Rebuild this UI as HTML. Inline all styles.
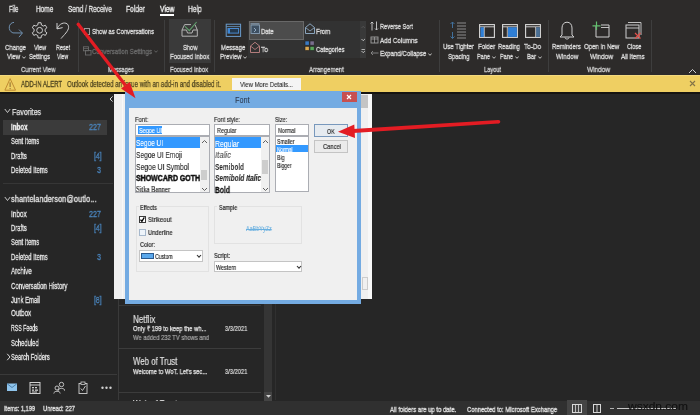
<!DOCTYPE html><html><head><meta charset="utf-8"><style>
html,body{margin:0;padding:0;}
body{width:700px;height:415px;position:relative;overflow:hidden;background:#262626;font-family:"Liberation Sans",sans-serif;}
.t{position:absolute;white-space:pre;line-height:1;transform-origin:0 0;will-change:transform;}
.r{position:absolute;}
</style></head><body>
<div class="r" style="left:0px;top:0px;width:700px;height:75px;background:#2d2b2a;"></div>
<div class="t" style="left:8.50px;top:5.10px;font-size:8.4px;color:#e4e4e4;transform:scaleX(0.7025);font-family:'Liberation Sans', sans-serif;-webkit-text-stroke:0.35px #e4e4e4;">File</div>
<div class="t" style="left:35.70px;top:5.10px;font-size:8.4px;color:#e4e4e4;transform:scaleX(0.7714);font-family:'Liberation Sans', sans-serif;-webkit-text-stroke:0.35px #e4e4e4;">Home</div>
<div class="t" style="left:68.10px;top:5.10px;font-size:8.4px;color:#e4e4e4;transform:scaleX(0.7708);font-family:'Liberation Sans', sans-serif;-webkit-text-stroke:0.35px #e4e4e4;">Send / Receive</div>
<div class="t" style="left:126.40px;top:5.10px;font-size:8.4px;color:#e4e4e4;transform:scaleX(0.7937);font-family:'Liberation Sans', sans-serif;-webkit-text-stroke:0.35px #e4e4e4;">Folder</div>
<div class="t" style="left:159.60px;top:5.10px;font-size:8.4px;color:#ffffff;transform:scaleX(0.7973);font-family:'Liberation Sans', sans-serif;-webkit-text-stroke:0.35px #ffffff;">View</div>
<div class="t" style="left:188.10px;top:5.10px;font-size:8.4px;color:#e4e4e4;transform:scaleX(0.7937);font-family:'Liberation Sans', sans-serif;-webkit-text-stroke:0.35px #e4e4e4;">Help</div>
<div class="r" style="left:159.6px;top:14px;width:14.400000000000006px;height:1.5px;background:#ffffff;"></div>
<div class="r" style="left:78px;top:20px;width:1px;height:52px;background:#3e3e3e;"></div>
<div class="r" style="left:164px;top:20px;width:1px;height:52px;background:#3e3e3e;"></div>
<div class="r" style="left:214px;top:20px;width:1px;height:52px;background:#3e3e3e;"></div>
<div class="r" style="left:439px;top:20px;width:1px;height:52px;background:#3e3e3e;"></div>
<div class="r" style="left:547.5px;top:20px;width:1.0px;height:52px;background:#3e3e3e;"></div>
<div class="r" style="left:651px;top:20px;width:1px;height:52px;background:#3e3e3e;"></div>
<div class="t" style="left:5.00px;top:43.69px;font-size:8px;color:#dcdcdc;transform:scaleX(0.7489);font-family:'Liberation Sans', sans-serif;-webkit-text-stroke:0.35px #dcdcdc;">Change</div>
<div class="t" style="left:6.60px;top:53.19px;font-size:8px;color:#dcdcdc;transform:scaleX(0.7558);font-family:'Liberation Sans', sans-serif;-webkit-text-stroke:0.35px #dcdcdc;">View</div>
<div class="t" style="left:34.00px;top:43.69px;font-size:8px;color:#dcdcdc;transform:scaleX(0.6977);font-family:'Liberation Sans', sans-serif;-webkit-text-stroke:0.35px #dcdcdc;">View</div>
<div class="t" style="left:29.00px;top:53.19px;font-size:8px;color:#dcdcdc;transform:scaleX(0.7261);font-family:'Liberation Sans', sans-serif;-webkit-text-stroke:0.35px #dcdcdc;">Settings</div>
<div class="t" style="left:55.50px;top:43.69px;font-size:8px;color:#dcdcdc;transform:scaleX(0.6753);font-family:'Liberation Sans', sans-serif;-webkit-text-stroke:0.35px #dcdcdc;">Reset</div>
<div class="t" style="left:57.00px;top:53.19px;font-size:8px;color:#dcdcdc;transform:scaleX(0.6395);font-family:'Liberation Sans', sans-serif;-webkit-text-stroke:0.35px #dcdcdc;">View</div>
<div class="t" style="left:21.00px;top:66.49px;font-size:8px;color:#cfcfcf;transform:scaleX(0.7480);font-family:'Liberation Sans', sans-serif;-webkit-text-stroke:0.35px #cfcfcf;">Current View</div>
<svg class="r" style="left:21.5px;top:55.5px" width="4" height="3" viewBox="0 0 4 3"><path d="M0.3 0.5 L2 2.3 L3.7 0.5" stroke="#dcdcdc" stroke-width="0.9" fill="none"/></svg>
<svg class="r" style="left:0px;top:0px" width="700" height="415" viewBox="0 0 700 415"><path d="M14 22.4 C8.5 22.6 7.3 30.6 12.9 32.9 L22.3 33" stroke="#7192b2" stroke-width="1" fill="none"/><path d="M19 29.6 L22.4 33 L19 37.2" stroke="#7192b2" stroke-width="1" fill="none"/></svg>
<svg class="r" style="left:0px;top:0px" width="700" height="415" viewBox="0 0 700 415"><path d="M41.07 22.74 L38.13 22.74 L37.78 25.01 L35.93 26.07 L33.79 25.25 L32.32 27.79 L34.10 29.23 L34.10 31.37 L32.32 32.81 L33.79 35.35 L35.93 34.53 L37.78 35.59 L38.13 37.86 L41.07 37.86 L41.42 35.59 L43.27 34.53 L45.41 35.35 L46.88 32.81 L45.10 31.37 L45.10 29.23 L46.88 27.79 L45.41 25.25 L43.27 26.07 L41.42 25.01 Z" stroke="#cfcfcf" stroke-width="1" fill="none" stroke-linejoin="round"/><circle cx="39.6" cy="30.3" r="2.9" stroke="#cfcfcf" stroke-width="1" fill="none"/></svg>
<svg class="r" style="left:0px;top:0px" width="700" height="415" viewBox="0 0 700 415"><path d="M57.2 28.6 C60 21.5 68.8 21.2 68.6 27.5 C68.4 31 64 35 61 38.6" stroke="#cfcfcf" stroke-width="1" fill="none"/><path d="M57 23 L57 28.9 L62.6 27.6" stroke="#cfcfcf" stroke-width="1" fill="none"/></svg>
<div class="r" style="left:83.6px;top:27.5px;width:6.300000000000011px;height:7.100000000000001px;background:transparent;border:1px solid #9a9a9a;box-sizing:border-box;"></div>
<div class="t" style="left:91.90px;top:28.09px;font-size:8px;color:#dcdcdc;transform:scaleX(0.7389);font-family:'Liberation Sans', sans-serif;-webkit-text-stroke:0.35px #dcdcdc;">Show as Conversations</div>
<svg class="r" style="left:82px;top:45px" width="10" height="11" viewBox="0 0 10 11"><rect x="1.5" y="1.8" width="5" height="4" stroke="#6a6a6a" fill="none" stroke-width="0.9"/><rect x="3.5" y="5.5" width="5.5" height="4.5" stroke="#6a6a6a" fill="none" stroke-width="0.9"/><line x1="1.5" y1="3.5" x2="6.5" y2="3.5" stroke="#6a6a6a" stroke-width="0.7"/></svg>
<div class="t" style="left:92.00px;top:47.69px;font-size:8px;color:#6a6a6a;transform:scaleX(0.7665);font-family:'Liberation Sans', sans-serif;-webkit-text-stroke:0.35px #6a6a6a;">Conversation Settings</div>
<svg class="r" style="left:154px;top:50px" width="4" height="3" viewBox="0 0 4 3"><path d="M0.3 0.5 L2 2.3 L3.7 0.5" stroke="#6a6a6a" stroke-width="0.9" fill="none"/></svg>
<div class="t" style="left:107.90px;top:66.49px;font-size:8px;color:#cfcfcf;transform:scaleX(0.7072);font-family:'Liberation Sans', sans-serif;-webkit-text-stroke:0.35px #cfcfcf;">Messages</div>
<div class="r" style="left:168.6px;top:18.9px;width:42.30000000000001px;height:43.800000000000004px;background:#3a3a3a;"></div>
<svg class="r" style="left:0px;top:0px" width="700" height="415" viewBox="0 0 700 415"><path d="M184.6 24.6 L191 24.6 M194.5 24.6 L195 24.6 L197.3 30 L197.3 36.2 L182 36.2 L182 30 L184.6 24.6 M182 30 L186.5 30 L187.5 33 L192 33 L193 30 L197.3 30" stroke="#b4b4b4" stroke-width="1" fill="none"/><path d="M185 26.3 L189.3 30.6 L196.6 22" stroke="#5f9f6c" stroke-width="1.1" fill="none"/></svg>
<div class="t" style="left:182.70px;top:43.69px;font-size:8px;color:#dcdcdc;transform:scaleX(0.7236);font-family:'Liberation Sans', sans-serif;-webkit-text-stroke:0.35px #dcdcdc;">Show</div>
<div class="t" style="left:170.00px;top:53.19px;font-size:8px;color:#dcdcdc;transform:scaleX(0.7489);font-family:'Liberation Sans', sans-serif;-webkit-text-stroke:0.35px #dcdcdc;">Focused Inbox</div>
<div class="t" style="left:170.00px;top:66.49px;font-size:8px;color:#cfcfcf;transform:scaleX(0.7241);font-family:'Liberation Sans', sans-serif;-webkit-text-stroke:0.35px #cfcfcf;">Focused Inbox</div>
<svg class="r" style="left:0px;top:0px" width="700" height="415" viewBox="0 0 700 415"><rect x="226.2" y="24.2" width="14.4" height="12.2" stroke="#6a9ccc" stroke-width="1" fill="none"/><line x1="226.2" y1="26.6" x2="240.6" y2="26.6" stroke="#6a9ccc" stroke-width="0.8"/><rect x="228" y="28.5" width="10.6" height="4.6" stroke="#4a8ad0" stroke-width="1" fill="#24384c"/><rect x="228" y="28.5" width="2" height="4.6" fill="#3a86d8"/></svg>
<div class="t" style="left:221.00px;top:43.69px;font-size:8px;color:#dcdcdc;transform:scaleX(0.7482);font-family:'Liberation Sans', sans-serif;-webkit-text-stroke:0.35px #dcdcdc;">Message</div>
<div class="t" style="left:220.00px;top:53.19px;font-size:8px;color:#dcdcdc;transform:scaleX(0.7549);font-family:'Liberation Sans', sans-serif;-webkit-text-stroke:0.35px #dcdcdc;">Preview</div>
<svg class="r" style="left:243px;top:55.5px" width="4" height="3" viewBox="0 0 4 3"><path d="M0.3 0.5 L2 2.3 L3.7 0.5" stroke="#dcdcdc" stroke-width="0.9" fill="none"/></svg>
<div class="r" style="left:248.4px;top:21px;width:111.79999999999998px;height:37px;background:#323232;"></div>
<div class="r" style="left:248.6px;top:21.1px;width:55.29999999999998px;height:18.5px;background:#4c4c4c;border:1px solid #686868;box-sizing:border-box;"></div>
<svg class="r" style="left:0px;top:0px" width="700" height="415" viewBox="0 0 700 415"><rect x="251" y="25" width="8.5" height="8.5" stroke="#8aa2b8" fill="#3e5062" stroke-width="0.9"/><line x1="250.5" y1="23.8" x2="259.5" y2="23.8" stroke="#8aa2b8" stroke-width="1"/><path d="M254 28 L256 30 L254 32" stroke="#a8c0d8" fill="none" stroke-width="0.8"/></svg>
<div class="t" style="left:260.80px;top:27.99px;font-size:8px;color:#dcdcdc;transform:scaleX(0.7405);font-family:'Liberation Sans', sans-serif;-webkit-text-stroke:0.35px #dcdcdc;">Date</div>
<svg class="r" style="left:0px;top:0px" width="700" height="415" viewBox="0 0 700 415"><path d="M250.5 46 L255 42.3 L259.5 46 L259.5 52.5 L250.5 52.5 Z" stroke="#b27c7c" fill="none" stroke-width="1"/><path d="M250.5 46 L255 49.5 L259.5 46" stroke="#b27c7c" fill="none" stroke-width="0.9"/></svg>
<div class="t" style="left:261.00px;top:45.99px;font-size:8px;color:#dcdcdc;transform:scaleX(0.8294);font-family:'Liberation Sans', sans-serif;-webkit-text-stroke:0.35px #dcdcdc;">To</div>
<svg class="r" style="left:0px;top:0px" width="700" height="415" viewBox="0 0 700 415"><path d="M305.5 27.5 L310 23.8 L314.5 27.5 L314.5 33.5 L305.5 33.5 Z" stroke="#8aa4bc" fill="none" stroke-width="1"/><path d="M305.5 27.5 L310 31 L314.5 27.5" stroke="#8aa4bc" fill="none" stroke-width="0.9"/></svg>
<div class="t" style="left:315.60px;top:27.99px;font-size:8px;color:#dcdcdc;transform:scaleX(0.7655);font-family:'Liberation Sans', sans-serif;-webkit-text-stroke:0.35px #dcdcdc;">From</div>
<svg class="r" style="left:0px;top:0px" width="700" height="415" viewBox="0 0 700 415"><g stroke="#222" stroke-width="0.6"><rect x="305" y="41" width="4.2" height="4.2" fill="#3a7ac4"/><rect x="310" y="41" width="4.2" height="4.2" fill="#7a6e8e"/><rect x="305" y="46.3" width="4.2" height="4.2" fill="#dca850"/><rect x="310" y="46.3" width="4.2" height="4.2" fill="#58a65a"/></g></svg>
<div class="t" style="left:315.60px;top:45.99px;font-size:8px;color:#dcdcdc;transform:scaleX(0.7342);font-family:'Liberation Sans', sans-serif;-webkit-text-stroke:0.35px #dcdcdc;">Categories</div>
<div class="r" style="left:360.2px;top:21px;width:6.300000000000011px;height:37px;background:#393939;"></div>
<svg class="r" style="left:360px;top:22px" width="7" height="35" viewBox="0 0 7 35"><path d="M1.5 6 L3.2 4.3 L4.9 6" stroke="#555" fill="none" stroke-width="0.9"/><path d="M1.5 17 L3.2 18.7 L4.9 17" stroke="#cfcfcf" fill="none" stroke-width="0.9"/><line x1="1.5" y1="27.5" x2="4.9" y2="27.5" stroke="#cfcfcf" stroke-width="0.8"/><path d="M1.5 29 L3.2 30.7 L4.9 29" stroke="#cfcfcf" fill="none" stroke-width="0.9"/></svg>
<svg class="r" style="left:370px;top:21px" width="9" height="10" viewBox="0 0 9 10"><path d="M2 9.5 L2 1 M0.5 2.5 L2 1 L3.5 2.5 M6.5 0.5 L6.5 9 M5 7.5 L6.5 9 L8 7.5" stroke="#d0d0d0" fill="none" stroke-width="0.9"/></svg>
<div class="t" style="left:379.80px;top:22.99px;font-size:8px;color:#dcdcdc;transform:scaleX(0.7048);font-family:'Liberation Sans', sans-serif;-webkit-text-stroke:0.35px #dcdcdc;">Reverse Sort</div>
<svg class="r" style="left:370px;top:35px" width="9" height="9" viewBox="0 0 9 9"><rect x="1" y="2" width="7" height="6" stroke="#a0a0a0" fill="none" stroke-width="0.9"/><line x1="1" y1="4" x2="8" y2="4" stroke="#a0a0a0" stroke-width="0.8"/><line x1="4.5" y1="2" x2="4.5" y2="8" stroke="#a0a0a0" stroke-width="0.8"/></svg>
<div class="t" style="left:379.80px;top:36.79px;font-size:8px;color:#dcdcdc;transform:scaleX(0.7827);font-family:'Liberation Sans', sans-serif;-webkit-text-stroke:0.35px #dcdcdc;">Add Columns</div>
<svg class="r" style="left:370px;top:49px" width="9" height="8" viewBox="0 0 9 8"><line x1="1" y1="4" x2="8.5" y2="4" stroke="#8a8a8a" stroke-width="0.9"/><path d="M3 2 L1 4 L3 6" stroke="#8a8a8a" fill="none" stroke-width="0.9"/></svg>
<div class="t" style="left:379.80px;top:50.09px;font-size:8px;color:#dcdcdc;transform:scaleX(0.7639);font-family:'Liberation Sans', sans-serif;-webkit-text-stroke:0.35px #dcdcdc;">Expand/Collapse</div>
<svg class="r" style="left:427.5px;top:52.5px" width="4" height="3" viewBox="0 0 4 3"><path d="M0.3 0.5 L2 2.3 L3.7 0.5" stroke="#dcdcdc" stroke-width="0.9" fill="none"/></svg>
<div class="t" style="left:308.80px;top:66.49px;font-size:8px;color:#cfcfcf;transform:scaleX(0.7526);font-family:'Liberation Sans', sans-serif;-webkit-text-stroke:0.35px #cfcfcf;">Arrangement</div>
<svg class="r" style="left:449px;top:21px" width="18" height="19" viewBox="0 0 18 19"><path d="M3.5 1 L3.5 7 M1.5 3 L3.5 1 L5.5 3 M3.5 11 L3.5 17.5 M1.5 15.5 L3.5 17.5 L5.5 15.5" stroke="#41709c" fill="none" stroke-width="1"/><g stroke="#8c8c8c" stroke-width="1"><line x1="8" y1="2" x2="17" y2="2"/><line x1="8" y1="5" x2="17" y2="5"/><line x1="8" y1="8" x2="17" y2="8"/><line x1="8" y1="11" x2="17" y2="11"/><line x1="8" y1="14" x2="17" y2="14"/><line x1="8" y1="17" x2="17" y2="17"/></g></svg>
<div class="t" style="left:443.20px;top:43.39px;font-size:8px;color:#dcdcdc;transform:scaleX(0.7527);font-family:'Liberation Sans', sans-serif;-webkit-text-stroke:0.35px #dcdcdc;">Use Tighter</div>
<div class="t" style="left:447.90px;top:53.19px;font-size:8px;color:#dcdcdc;transform:scaleX(0.7400);font-family:'Liberation Sans', sans-serif;-webkit-text-stroke:0.35px #dcdcdc;">Spacing</div>
<svg class="r" style="left:478.5px;top:23.5px" width="16" height="14" viewBox="0 0 16 14"><rect x="0.6" y="0.6" width="14.8" height="12.8" stroke="#d8d8d8" fill="none" stroke-width="1.1"/><line x1="0.6" y1="2.8" x2="15.4" y2="2.8" stroke="#d8d8d8" stroke-width="0.9"/><rect x="1.5" y="3.3" width="3.5" height="9.6" fill="#2f7fd6"/><line x1="5.3" y1="3" x2="5.3" y2="13" stroke="#d8d8d8" stroke-width="0.8"/></svg>
<div class="t" style="left:477.50px;top:43.39px;font-size:8px;color:#dcdcdc;transform:scaleX(0.7584);font-family:'Liberation Sans', sans-serif;-webkit-text-stroke:0.35px #dcdcdc;">Folder</div>
<div class="t" style="left:477.00px;top:53.19px;font-size:8px;color:#dcdcdc;transform:scaleX(0.6959);font-family:'Liberation Sans', sans-serif;-webkit-text-stroke:0.35px #dcdcdc;">Pane</div>
<svg class="r" style="left:492px;top:55.5px" width="4" height="3" viewBox="0 0 4 3"><path d="M0.3 0.5 L2 2.3 L3.7 0.5" stroke="#dcdcdc" stroke-width="0.9" fill="none"/></svg>
<svg class="r" style="left:501.5px;top:23.5px" width="16" height="14" viewBox="0 0 16 14"><rect x="0.6" y="0.6" width="14.8" height="12.8" stroke="#d8d8d8" fill="none" stroke-width="1.1"/><line x1="0.6" y1="2.8" x2="15.4" y2="2.8" stroke="#d8d8d8" stroke-width="0.9"/><rect x="6" y="3.3" width="8.9" height="9.6" fill="#2f7fd6"/><line x1="5.3" y1="3" x2="5.3" y2="13" stroke="#d8d8d8" stroke-width="0.8"/></svg>
<div class="t" style="left:498.00px;top:43.39px;font-size:8px;color:#dcdcdc;transform:scaleX(0.7349);font-family:'Liberation Sans', sans-serif;-webkit-text-stroke:0.35px #dcdcdc;">Reading</div>
<div class="t" style="left:500.00px;top:53.19px;font-size:8px;color:#dcdcdc;transform:scaleX(0.6959);font-family:'Liberation Sans', sans-serif;-webkit-text-stroke:0.35px #dcdcdc;">Pane</div>
<svg class="r" style="left:515px;top:55.5px" width="4" height="3" viewBox="0 0 4 3"><path d="M0.3 0.5 L2 2.3 L3.7 0.5" stroke="#dcdcdc" stroke-width="0.9" fill="none"/></svg>
<svg class="r" style="left:525px;top:23.5px" width="16" height="14" viewBox="0 0 16 14"><rect x="0.6" y="0.6" width="14.8" height="12.8" stroke="#d8d8d8" fill="none" stroke-width="1.1"/><line x1="0.6" y1="2.8" x2="15.4" y2="2.8" stroke="#d8d8d8" stroke-width="0.9"/><rect x="11" y="3.3" width="3.9" height="9.6" fill="#4a6f94"/><line x1="10.6" y1="3" x2="10.6" y2="13" stroke="#d8d8d8" stroke-width="0.8"/></svg>
<div class="t" style="left:524.00px;top:43.39px;font-size:8px;color:#dcdcdc;transform:scaleX(0.7959);font-family:'Liberation Sans', sans-serif;-webkit-text-stroke:0.35px #dcdcdc;">To-Do</div>
<div class="t" style="left:527.00px;top:53.19px;font-size:8px;color:#dcdcdc;transform:scaleX(0.7235);font-family:'Liberation Sans', sans-serif;-webkit-text-stroke:0.35px #dcdcdc;">Bar</div>
<svg class="r" style="left:537.5px;top:55.5px" width="4" height="3" viewBox="0 0 4 3"><path d="M0.3 0.5 L2 2.3 L3.7 0.5" stroke="#dcdcdc" stroke-width="0.9" fill="none"/></svg>
<div class="t" style="left:483.90px;top:66.49px;font-size:8px;color:#cfcfcf;transform:scaleX(0.7113);font-family:'Liberation Sans', sans-serif;-webkit-text-stroke:0.35px #cfcfcf;">Layout</div>
<svg class="r" style="left:559px;top:21px" width="16" height="19" viewBox="0 0 16 19"><path d="M3 14 L3 7 C3 3.5 5 1.2 8 1.2 C11 1.2 13 3.5 13 7 L13 14 L15 16 L1 16 Z" stroke="#d0d0d0" fill="none" stroke-width="1"/><path d="M6 16.5 C6 18.5 10 18.5 10 16.5" stroke="#d0d0d0" fill="none" stroke-width="1"/></svg>
<div class="t" style="left:552.30px;top:43.39px;font-size:8px;color:#dcdcdc;transform:scaleX(0.7446);font-family:'Liberation Sans', sans-serif;-webkit-text-stroke:0.35px #dcdcdc;">Reminders</div>
<div class="t" style="left:555.80px;top:53.19px;font-size:8px;color:#dcdcdc;transform:scaleX(0.7795);font-family:'Liberation Sans', sans-serif;-webkit-text-stroke:0.35px #dcdcdc;">Window</div>
<svg class="r" style="left:592px;top:21px" width="18" height="17" viewBox="0 0 18 17"><path d="M4 5 L4 16 L17 16 L17 4 L9 4" stroke="#d0d0d0" fill="none" stroke-width="1"/><line x1="9" y1="6.5" x2="17" y2="6.5" stroke="#d0d0d0" stroke-width="0.9"/><path d="M4.5 0.5 L4.5 9 M0.5 4.8 L8.5 4.8" stroke="#62c06e" stroke-width="1.2"/></svg>
<div class="t" style="left:583.70px;top:43.39px;font-size:8px;color:#dcdcdc;transform:scaleX(0.7606);font-family:'Liberation Sans', sans-serif;-webkit-text-stroke:0.35px #dcdcdc;">Open in New</div>
<div class="t" style="left:590.00px;top:53.19px;font-size:8px;color:#dcdcdc;transform:scaleX(0.8076);font-family:'Liberation Sans', sans-serif;-webkit-text-stroke:0.35px #dcdcdc;">Window</div>
<svg class="r" style="left:625px;top:21px" width="17" height="19" viewBox="0 0 17 19"><rect x="1" y="4" width="13" height="13" stroke="#d0d0d0" fill="none" stroke-width="1"/><line x1="1" y1="7" x2="14" y2="7" stroke="#d0d0d0" stroke-width="0.9"/><path d="M3 1.5 L16 1.5 L16 14" stroke="#d0d0d0" fill="none" stroke-width="0.9"/><path d="M10 12 L15.5 17.5 M15.5 12 L10 17.5" stroke="#e0504a" stroke-width="1.2"/></svg>
<div class="t" style="left:626.60px;top:43.39px;font-size:8px;color:#dcdcdc;transform:scaleX(0.7045);font-family:'Liberation Sans', sans-serif;-webkit-text-stroke:0.35px #dcdcdc;">Close</div>
<div class="t" style="left:621.40px;top:53.19px;font-size:8px;color:#dcdcdc;transform:scaleX(0.7692);font-family:'Liberation Sans', sans-serif;-webkit-text-stroke:0.35px #dcdcdc;">All Items</div>
<div class="t" style="left:587.00px;top:66.49px;font-size:8px;color:#cfcfcf;transform:scaleX(0.8076);font-family:'Liberation Sans', sans-serif;-webkit-text-stroke:0.35px #cfcfcf;">Window</div>
<svg class="r" style="left:688px;top:68px" width="9" height="6" viewBox="0 0 9 6"><path d="M1 5 L4.5 1.5 L8 5" stroke="#d0d0d0" fill="none" stroke-width="1"/></svg>
<div class="r" style="left:0px;top:74.8px;width:700px;height:17.5px;background:#efcf62;"></div>
<div class="r" style="left:0px;top:74.8px;width:700px;height:1.0px;background:#f3d97e;"></div>
<div class="r" style="left:0px;top:92.3px;width:700px;height:2.0px;background:#161410;"></div>
<svg class="r" style="left:0px;top:0px" width="700" height="415" viewBox="0 0 700 415"><path d="M10.1 78.6 L15.5 90.2 L4.9 90.2 Z" stroke="#bf8a32" fill="none" stroke-width="1" stroke-linejoin="round"/><line x1="10.1" y1="82.3" x2="10.1" y2="87" stroke="#8a6a30" stroke-width="1"/><circle cx="10.1" cy="88.6" r="0.6" fill="#8a6a30"/></svg>
<div class="t" style="left:20.60px;top:79.70px;font-size:8.6px;color:#4e4420;transform:scaleX(0.6956);font-family:'Liberation Sans', sans-serif;-webkit-text-stroke:0.3px #4e4420;">ADD-IN ALERT</div>
<div class="t" style="left:66.90px;top:79.90px;font-size:8.6px;color:#4e4420;transform:scaleX(0.7147);font-family:'Liberation Sans', sans-serif;-webkit-text-stroke:0.25px #4e4420;">Outlook detected an issue with an add-in and disabled it.</div>
<div class="r" style="left:232px;top:78px;width:69px;height:11.599999999999994px;background:#f4f4f4;"></div>
<div class="t" style="left:240.00px;top:80.89px;font-size:8px;color:#333333;transform:scaleX(0.7465);font-family:'Liberation Sans', sans-serif;-webkit-text-stroke:0.15px #333333;">View More Details...</div>
<svg class="r" style="left:688.5px;top:80px" width="7" height="7" viewBox="0 0 7 7"><path d="M1 1 L6 6 M6 1 L1 6" stroke="#857448" stroke-width="1.1"/></svg>
<svg class="r" style="left:108.5px;top:95.5px" width="5" height="6" viewBox="0 0 5 6"><path d="M3.6 0.5 L1 3 L3.6 5.5" stroke="#d8d8d8" fill="none" stroke-width="1"/></svg>
<svg class="r" style="left:4px;top:108px" width="7" height="6" viewBox="0 0 7 6"><path d="M0.8 1 L3.5 4.5 L6.2 1" stroke="#d8d8d8" fill="none" stroke-width="0.9"/></svg>
<div class="t" style="left:12.00px;top:106.51px;font-size:9.4px;color:#e6e6e6;transform:scaleX(0.7532);font-family:'Liberation Sans', sans-serif;-webkit-text-stroke:0.25px #e6e6e6;">Favorites</div>
<div class="r" style="left:2.6px;top:120px;width:104.4px;height:14.599999999999994px;background:#3b3b3b;"></div>
<div class="t" style="left:11.30px;top:123.20px;font-size:9px;color:#f0f0f0;transform:scaleX(0.6879);font-family:'Liberation Sans', sans-serif;-webkit-text-stroke:0.35px #f0f0f0;font-weight:bold;">Inbox</div>
<div class="t" style="left:89.00px;top:123.20px;font-size:9px;color:#4a84bc;transform:scaleX(0.7917);font-family:'Liberation Sans', sans-serif;-webkit-text-stroke:0.35px #4a84bc;">227</div>
<div class="t" style="left:11.30px;top:137.40px;font-size:9px;color:#e6e6e6;transform:scaleX(0.6555);font-family:'Liberation Sans', sans-serif;-webkit-text-stroke:0.35px #e6e6e6;">Sent Items</div>
<div class="t" style="left:11.30px;top:152.20px;font-size:9px;color:#e6e6e6;transform:scaleX(0.6546);font-family:'Liberation Sans', sans-serif;-webkit-text-stroke:0.35px #e6e6e6;">Drafts</div>
<div class="t" style="left:93.50px;top:152.20px;font-size:9px;color:#4a84bc;transform:scaleX(0.7508);font-family:'Liberation Sans', sans-serif;-webkit-text-stroke:0.35px #4a84bc;">[4]</div>
<div class="t" style="left:11.30px;top:166.20px;font-size:9px;color:#e6e6e6;transform:scaleX(0.6609);font-family:'Liberation Sans', sans-serif;-webkit-text-stroke:0.35px #e6e6e6;">Deleted Items</div>
<div class="t" style="left:97.00px;top:166.20px;font-size:9px;color:#4a84bc;transform:scaleX(0.8008);font-family:'Liberation Sans', sans-serif;-webkit-text-stroke:0.35px #4a84bc;">3</div>
<div class="r" style="left:3px;top:182.8px;width:110px;height:1.0px;background:#363636;"></div>
<svg class="r" style="left:4px;top:196px" width="7" height="6" viewBox="0 0 7 6"><path d="M0.8 1 L3.5 4.5 L6.2 1" stroke="#d8d8d8" fill="none" stroke-width="0.9"/></svg>
<div class="t" style="left:11.40px;top:194.41px;font-size:9.4px;color:#e6e6e6;transform:scaleX(0.7981);font-family:'Liberation Sans', sans-serif;-webkit-text-stroke:0.3px #e6e6e6;">shantelanderson@outlo...</div>
<div class="t" style="left:11.30px;top:209.80px;font-size:9px;color:#e6e6e6;transform:scaleX(0.7135);font-family:'Liberation Sans', sans-serif;-webkit-text-stroke:0.35px #e6e6e6;">Inbox</div>
<div class="t" style="left:89.00px;top:209.80px;font-size:9px;color:#4a84bc;transform:scaleX(0.7917);font-family:'Liberation Sans', sans-serif;-webkit-text-stroke:0.35px #4a84bc;">227</div>
<div class="t" style="left:11.30px;top:223.70px;font-size:9px;color:#e6e6e6;transform:scaleX(0.6546);font-family:'Liberation Sans', sans-serif;-webkit-text-stroke:0.35px #e6e6e6;">Drafts</div>
<div class="t" style="left:93.50px;top:223.70px;font-size:9px;color:#4a84bc;transform:scaleX(0.7508);font-family:'Liberation Sans', sans-serif;-webkit-text-stroke:0.35px #4a84bc;">[4]</div>
<div class="t" style="left:11.30px;top:238.00px;font-size:9px;color:#e6e6e6;transform:scaleX(0.6555);font-family:'Liberation Sans', sans-serif;-webkit-text-stroke:0.35px #e6e6e6;">Sent Items</div>
<div class="t" style="left:11.30px;top:252.50px;font-size:9px;color:#e6e6e6;transform:scaleX(0.6609);font-family:'Liberation Sans', sans-serif;-webkit-text-stroke:0.35px #e6e6e6;">Deleted Items</div>
<div class="t" style="left:97.00px;top:252.50px;font-size:9px;color:#4a84bc;transform:scaleX(0.8008);font-family:'Liberation Sans', sans-serif;-webkit-text-stroke:0.35px #4a84bc;">3</div>
<div class="t" style="left:11.30px;top:266.60px;font-size:9px;color:#e6e6e6;transform:scaleX(0.6897);font-family:'Liberation Sans', sans-serif;-webkit-text-stroke:0.35px #e6e6e6;">Archive</div>
<div class="t" style="left:11.30px;top:281.60px;font-size:9px;color:#e6e6e6;transform:scaleX(0.6753);font-family:'Liberation Sans', sans-serif;-webkit-text-stroke:0.35px #e6e6e6;">Conversation History</div>
<div class="t" style="left:11.30px;top:295.70px;font-size:9px;color:#e6e6e6;transform:scaleX(0.6544);font-family:'Liberation Sans', sans-serif;-webkit-text-stroke:0.35px #e6e6e6;">Junk Email</div>
<div class="t" style="left:93.50px;top:295.70px;font-size:9px;color:#4a84bc;transform:scaleX(0.7508);font-family:'Liberation Sans', sans-serif;-webkit-text-stroke:0.35px #4a84bc;">[8]</div>
<div class="t" style="left:11.30px;top:309.30px;font-size:9px;color:#e6e6e6;transform:scaleX(0.6960);font-family:'Liberation Sans', sans-serif;-webkit-text-stroke:0.35px #e6e6e6;">Outbox</div>
<div class="t" style="left:11.30px;top:324.10px;font-size:9px;color:#e6e6e6;transform:scaleX(0.5800);font-family:'Liberation Sans', sans-serif;-webkit-text-stroke:0.35px #e6e6e6;">RSS Feeds</div>
<div class="t" style="left:11.30px;top:338.60px;font-size:9px;color:#e6e6e6;transform:scaleX(0.6514);font-family:'Liberation Sans', sans-serif;-webkit-text-stroke:0.35px #e6e6e6;">Scheduled</div>
<svg class="r" style="left:6px;top:353px" width="5" height="8" viewBox="0 0 5 8"><path d="M1.2 0.8 L4 4 L1.2 7.2" stroke="#d8d8d8" fill="none" stroke-width="1"/></svg>
<div class="t" style="left:11.30px;top:353.20px;font-size:9px;color:#e6e6e6;transform:scaleX(0.6342);font-family:'Liberation Sans', sans-serif;-webkit-text-stroke:0.35px #e6e6e6;">Search Folders</div>
<div class="r" style="left:0px;top:373.5px;width:117px;height:1.0px;background:#3a3a3a;"></div>
<svg class="r" style="left:7px;top:383px" width="10" height="8" viewBox="0 0 10 8"><rect x="0" y="0.5" width="10" height="7.5" fill="#8fc4ec"/><path d="M0.2 0.8 L5 4.5 L9.8 0.8" stroke="#3b6f9a" fill="none" stroke-width="0.8"/></svg>
<svg class="r" style="left:29px;top:381px" width="12" height="13" viewBox="0 0 12 13"><rect x="1" y="1.5" width="10" height="11" stroke="#d0d0d0" fill="none" stroke-width="1"/><line x1="1" y1="4" x2="11" y2="4" stroke="#d0d0d0" stroke-width="1"/><g fill="#d0d0d0"><rect x="3" y="6" width="2" height="1.3"/><rect x="6" y="6" width="2" height="1.3"/><rect x="3" y="8.5" width="2" height="1.3"/><rect x="6" y="8.5" width="3" height="1.3"/><rect x="3" y="10.5" width="5" height="1"/></g></svg>
<svg class="r" style="left:53px;top:381px" width="12" height="13" viewBox="0 0 12 13"><circle cx="8.5" cy="3.5" r="2.2" stroke="#d0d0d0" fill="none" stroke-width="0.9"/><path d="M5 10 C5 6.5 12 6.5 12 10" stroke="#d0d0d0" fill="none" stroke-width="0.9"/><circle cx="4" cy="7" r="2" stroke="#d0d0d0" fill="none" stroke-width="0.9"/><path d="M0.8 12.5 C0.8 9.5 7.2 9.5 7.2 12.5" stroke="#d0d0d0" fill="none" stroke-width="0.9"/></svg>
<svg class="r" style="left:78px;top:381px" width="10" height="13" viewBox="0 0 10 13"><rect x="1" y="2.5" width="8" height="10" stroke="#d0d0d0" fill="none" stroke-width="0.9"/><rect x="3" y="1" width="4" height="2.5" stroke="#d0d0d0" fill="#262626" stroke-width="0.8"/><path d="M2.8 7.5 L4.5 9.5 L7.5 5" stroke="#d0d0d0" fill="none" stroke-width="0.9"/></svg>
<svg class="r" style="left:100px;top:386px" width="13" height="4" viewBox="0 0 13 4"><circle cx="2.5" cy="1.8" r="1.2" fill="#d0d0d0"/><circle cx="6.5" cy="1.8" r="1.2" fill="#d0d0d0"/><circle cx="10.5" cy="1.8" r="1.2" fill="#d0d0d0"/></svg>
<div class="r" style="left:118px;top:299px;width:1px;height:101px;background:#3a3a3a;"></div>
<div class="t" style="left:133.30px;top:314.62px;font-size:10px;color:#e4e4e4;transform:scaleX(0.8022);font-family:'Liberation Sans', sans-serif;-webkit-text-stroke:0.15px #e4e4e4;">Netflix</div>
<div class="t" style="left:133.30px;top:325.38px;font-size:7.2px;color:#ececec;transform:scaleX(0.8216);font-family:'Liberation Sans', sans-serif;-webkit-text-stroke:0.25px #ececec;">Only ₹ 199 to keep the wh...</div>
<div class="t" style="left:225.00px;top:325.38px;font-size:7.2px;color:#dcdcdc;transform:scaleX(0.7987);font-family:'Liberation Sans', sans-serif;-webkit-text-stroke:0.2px #dcdcdc;">3/3/2021</div>
<div class="t" style="left:133.30px;top:333.88px;font-size:7.2px;color:#a8a8a8;transform:scaleX(0.8088);font-family:'Liberation Sans', sans-serif;-webkit-text-stroke:0.2px #a8a8a8;">We added 232 TV shows and</div>
<div class="r" style="left:119px;top:347.8px;width:142px;height:0.8999999999999773px;background:#3c3c3c;"></div>
<div class="r" style="left:119px;top:304.5px;width:142px;height:1.0px;background:#383838;"></div>
<div class="t" style="left:133.30px;top:357.02px;font-size:10px;color:#e4e4e4;transform:scaleX(0.7841);font-family:'Liberation Sans', sans-serif;-webkit-text-stroke:0.15px #e4e4e4;">Web of Trust</div>
<div class="t" style="left:133.30px;top:368.08px;font-size:7.2px;color:#ececec;transform:scaleX(0.8036);font-family:'Liberation Sans', sans-serif;-webkit-text-stroke:0.25px #ececec;">Welcome to WoT. Let's sec...</div>
<div class="t" style="left:225.00px;top:368.08px;font-size:7.2px;color:#dcdcdc;transform:scaleX(0.7987);font-family:'Liberation Sans', sans-serif;-webkit-text-stroke:0.2px #dcdcdc;">3/3/2021</div>
<div class="r" style="left:119px;top:391.5px;width:142px;height:0.8000000000000114px;background:#3c3c3c;"></div>
<div class="t" style="left:133.30px;top:399.72px;font-size:10px;color:#e4e4e4;transform:scaleX(0.7841);font-family:'Liberation Sans', sans-serif;-webkit-text-stroke:0.15px #e4e4e4;">Web of Trust</div>
<div class="r" style="left:264px;top:299px;width:8px;height:101px;background:#353535;"></div>
<div class="r" style="left:264px;top:392px;width:8px;height:8.5px;background:#444444;"></div>
<svg class="r" style="left:264.5px;top:394px" width="7" height="5" viewBox="0 0 7 5"><path d="M1 1 L3.5 3.8 L6 1 Z" fill="#d0d0d0"/></svg>
<div class="r" style="left:274.5px;top:299px;width:1.0px;height:101px;background:#303030;"></div>
<div class="r" style="left:0px;top:400.5px;width:700px;height:14.5px;background:#303030;"></div>
<div class="t" style="left:4.00px;top:405.44px;font-size:7.5px;color:#e0e0e0;transform:scaleX(0.7508);font-family:'Liberation Sans', sans-serif;-webkit-text-stroke:0.35px #e0e0e0;">Items: 1,199</div>
<div class="t" style="left:43.00px;top:405.44px;font-size:7.5px;color:#e0e0e0;transform:scaleX(0.7751);font-family:'Liberation Sans', sans-serif;-webkit-text-stroke:0.35px #e0e0e0;">Unread: 227</div>
<div class="t" style="left:390.30px;top:405.64px;font-size:7.5px;color:#e0e0e0;transform:scaleX(0.7950);font-family:'Liberation Sans', sans-serif;-webkit-text-stroke:0.35px #e0e0e0;">All folders are up to date.</div>
<div class="t" style="left:466.90px;top:405.64px;font-size:7.5px;color:#e0e0e0;transform:scaleX(0.7860);font-family:'Liberation Sans', sans-serif;-webkit-text-stroke:0.35px #e0e0e0;">Connected to: Microsoft Exchange</div>
<div class="r" style="left:567.4px;top:400px;width:19.5px;height:15px;background:#444444;"></div>
<svg class="r" style="left:572px;top:404px" width="10" height="9" viewBox="0 0 10 9"><rect x="0.5" y="0.5" width="9" height="8" stroke="#d8d8d8" fill="none" stroke-width="1"/><line x1="3.5" y1="0.5" x2="3.5" y2="8.5" stroke="#d8d8d8" stroke-width="0.8"/><line x1="6.5" y1="0.5" x2="6.5" y2="8.5" stroke="#d8d8d8" stroke-width="0.8"/></svg>
<svg class="r" style="left:593px;top:404px" width="8" height="9" viewBox="0 0 8 9"><rect x="0.5" y="0.5" width="7" height="8" stroke="#d8d8d8" fill="none" stroke-width="1"/><line x1="4" y1="0.5" x2="4" y2="8.5" stroke="#d8d8d8" stroke-width="0.9"/></svg>
<div class="r" style="left:610px;top:408px;width:4px;height:1px;background:#b0b0b0;"></div>
<div class="r" style="left:617px;top:408px;width:59px;height:1px;background:#c8c8c8;"></div>
<div class="t" style="left:627.96px;top:400.67px;font-size:10.5px;color:#111111;transform:scaleX(1.1417);font-family:'Liberation Sans', sans-serif;-webkit-text-stroke:0.1px #111111;">wsxdn.com</div>
<div class="r" style="left:113.9px;top:94.3px;width:257.79999999999995px;height:204.7px;background:#f0f0f0;"></div>
<div class="r" style="left:361.3px;top:95.2px;width:6.699999999999989px;height:12.599999999999994px;background:#c4c4c4;"></div>
<div class="r" style="left:368px;top:94.3px;width:3.6999999999999886px;height:204.7px;background:#f8f8f8;"></div>
<div class="r" style="left:121.5px;top:94.3px;width:0.7999999999999972px;height:204.7px;background:#f8f8f8;"></div>
<div class="r" style="left:361.5px;top:277px;width:6.0px;height:13px;background:transparent;border:1px solid #cccccc;box-sizing:border-box;"></div>
<div class="r" style="left:124.7px;top:90.5px;width:236.0px;height:213.5px;background:#74abe2;"></div>
<div class="r" style="left:129px;top:108px;width:227.5px;height:191.5px;background:#f0f0f0;"></div>
<div class="t" style="left:235.20px;top:95.80px;font-size:9px;color:#2c3a50;transform:scaleX(0.8111);font-family:'Liberation Sans', sans-serif;-webkit-text-stroke:0.1px #2c3a50;">Font</div>
<div class="r" style="left:342px;top:91.6px;width:14.600000000000023px;height:10.800000000000011px;background:#c75050;"></div>
<svg class="r" style="left:346.3px;top:94px" width="6" height="6" viewBox="0 0 6 6"><path d="M1 1 L5 5 M5 1 L1 5" stroke="#ffffff" stroke-width="1.2"/></svg>
<div class="t" style="left:134.80px;top:117.22px;font-size:6.5px;color:#2a2a2a;transform:scaleX(0.8907);font-family:'Liberation Sans', sans-serif;-webkit-text-stroke:0.15px #2a2a2a;">Font:</div>
<div class="t" style="left:214.00px;top:117.22px;font-size:6.5px;color:#2a2a2a;transform:scaleX(0.8667);font-family:'Liberation Sans', sans-serif;-webkit-text-stroke:0.15px #2a2a2a;">Font style:</div>
<div class="t" style="left:274.80px;top:117.22px;font-size:6.5px;color:#2a2a2a;transform:scaleX(0.8436);font-family:'Liberation Sans', sans-serif;-webkit-text-stroke:0.15px #2a2a2a;">Size:</div>
<div class="r" style="left:134.8px;top:124px;width:74.79999999999998px;height:11.599999999999994px;background:#ffffff;border:1px solid #abadb3;box-sizing:border-box;"></div>
<div class="r" style="left:138px;top:126.3px;width:24px;height:7.3999999999999915px;background:#3399ff;"></div>
<div class="t" style="left:138.50px;top:126.94px;font-size:7.5px;color:#ffffff;transform:scaleX(0.7354);font-family:'Liberation Sans', sans-serif;-webkit-text-stroke:0.15px #ffffff;">Segoe UI</div>
<div class="r" style="left:213.7px;top:124px;width:56.30000000000001px;height:11.599999999999994px;background:#ffffff;border:1px solid #abadb3;box-sizing:border-box;"></div>
<div class="t" style="left:216.50px;top:126.98px;font-size:7px;color:#2a2a2a;transform:scaleX(0.7959);font-family:'Liberation Sans', sans-serif;-webkit-text-stroke:0.15px #2a2a2a;">Regular</div>
<div class="r" style="left:274.8px;top:124px;width:34.69999999999999px;height:11.599999999999994px;background:#ffffff;border:1px solid #abadb3;box-sizing:border-box;"></div>
<div class="t" style="left:277.50px;top:126.98px;font-size:7px;color:#2a2a2a;transform:scaleX(0.7752);font-family:'Liberation Sans', sans-serif;-webkit-text-stroke:0.15px #2a2a2a;">Normal</div>
<div class="r" style="left:134.8px;top:135.6px;width:74.79999999999998px;height:57.900000000000006px;background:#ffffff;border:1px solid #abadb3;box-sizing:border-box;"></div>
<div class="r" style="left:135.8px;top:136.6px;width:64.19999999999999px;height:11.900000000000006px;background:#3399ff;"></div>
<div class="r" style="left:200px;top:136.6px;width:8.599999999999994px;height:55.900000000000006px;background:#f0f0f0;"></div>
<div class="r" style="left:201.2px;top:170px;width:6.300000000000011px;height:10px;background:#cdcdcd;"></div>
<svg class="r" style="left:201px;top:139px" width="7" height="5" viewBox="0 0 7 5"><path d="M1 4 L3.5 1.5 L6 4" stroke="#606060" fill="none" stroke-width="1"/></svg>
<svg class="r" style="left:201px;top:187px" width="7" height="5" viewBox="0 0 7 5"><path d="M1 1 L3.5 3.5 L6 1" stroke="#606060" fill="none" stroke-width="1"/></svg>
<div class="t" style="left:136.00px;top:138.31px;font-size:9.8px;color:#ffffff;transform:scaleX(0.6607);font-family:'Liberation Sans', sans-serif;-webkit-text-stroke:0.15px #ffffff;">Segoe UI</div>
<div class="t" style="left:136.00px;top:150.41px;font-size:9.8px;color:#2a2a2a;transform:scaleX(0.6754);font-family:'Liberation Sans', sans-serif;-webkit-text-stroke:0.15px #2a2a2a;">Segoe UI Emoji</div>
<div class="t" style="left:136.00px;top:161.61px;font-size:9.8px;color:#2a2a2a;transform:scaleX(0.6951);font-family:'Liberation Sans', sans-serif;-webkit-text-stroke:0.15px #2a2a2a;">Segoe UI Symbol</div>
<div class="t" style="left:136.00px;top:172.96px;font-size:9.5px;color:#111111;transform:scaleX(0.7351);font-family:'Liberation Sans', sans-serif;-webkit-text-stroke:0.5px #111111;font-weight:bold;">SHOWCARD GOTH</div>
<div class="t" style="left:136.00px;top:186.19px;font-size:7.6px;color:#2a2a2a;transform:scaleX(0.8612);font-family:'Liberation Serif', serif;-webkit-text-stroke:0.2px #2a2a2a;">Sitka Banner</div>
<div class="r" style="left:213.7px;top:135.6px;width:56.30000000000001px;height:57.900000000000006px;background:#ffffff;border:1px solid #abadb3;box-sizing:border-box;"></div>
<div class="r" style="left:214.7px;top:136.6px;width:46.30000000000001px;height:11.900000000000006px;background:#3399ff;"></div>
<div class="r" style="left:261px;top:136.6px;width:8px;height:55.900000000000006px;background:#f0f0f0;"></div>
<div class="r" style="left:262px;top:160px;width:6px;height:14px;background:#cdcdcd;"></div>
<svg class="r" style="left:262px;top:139px" width="7" height="5" viewBox="0 0 7 5"><path d="M1 4 L3.5 1.5 L6 4" stroke="#606060" fill="none" stroke-width="1"/></svg>
<svg class="r" style="left:262px;top:187px" width="7" height="5" viewBox="0 0 7 5"><path d="M1 1 L3.5 3.5 L6 1" stroke="#606060" fill="none" stroke-width="1"/></svg>
<div class="t" style="left:215.00px;top:138.81px;font-size:9.8px;color:#ffffff;transform:scaleX(0.6997);font-family:'Liberation Sans', sans-serif;-webkit-text-stroke:0.15px #ffffff;">Regular</div>
<div class="t" style="left:215.00px;top:150.41px;font-size:9.8px;color:#555555;transform:scaleX(0.7945);font-family:'Liberation Sans', sans-serif;-webkit-text-stroke:0.15px #555555;font-style:italic;">Italic</div>
<div class="t" style="left:215.00px;top:161.61px;font-size:9.8px;color:#2a2a2a;transform:scaleX(0.6576);font-family:'Liberation Sans', sans-serif;-webkit-text-stroke:0.05px #2a2a2a;font-weight:bold;">Semibold</div>
<div class="t" style="left:215.00px;top:172.81px;font-size:9.8px;color:#2a2a2a;transform:scaleX(0.6653);font-family:'Liberation Sans', sans-serif;-webkit-text-stroke:0.15px #2a2a2a;font-weight:bold;font-style:italic;">Semibold Italic</div>
<div class="t" style="left:215.00px;top:184.61px;font-size:9.8px;color:#111111;transform:scaleX(0.6895);font-family:'Liberation Sans', sans-serif;-webkit-text-stroke:0.3px #111111;font-weight:bold;">Bold</div>
<div class="r" style="left:274.8px;top:135.6px;width:34.69999999999999px;height:56.80000000000001px;background:#ffffff;border:1px solid #abadb3;box-sizing:border-box;"></div>
<div class="r" style="left:275.8px;top:144.7px;width:32.69999999999999px;height:7.600000000000023px;background:#3399ff;"></div>
<div class="t" style="left:276.50px;top:138.38px;font-size:7px;color:#2a2a2a;transform:scaleX(0.7375);font-family:'Liberation Sans', sans-serif;-webkit-text-stroke:0.15px #2a2a2a;">Smaller</div>
<div class="t" style="left:276.50px;top:145.68px;font-size:7px;color:#ffffff;transform:scaleX(0.6866);font-family:'Liberation Sans', sans-serif;-webkit-text-stroke:0.15px #ffffff;">Normal</div>
<div class="t" style="left:276.50px;top:154.18px;font-size:7px;color:#2a2a2a;transform:scaleX(0.7415);font-family:'Liberation Sans', sans-serif;-webkit-text-stroke:0.15px #2a2a2a;">Big</div>
<div class="t" style="left:276.50px;top:161.68px;font-size:7px;color:#2a2a2a;transform:scaleX(0.7168);font-family:'Liberation Sans', sans-serif;-webkit-text-stroke:0.15px #2a2a2a;">Bigger</div>
<div class="r" style="left:314.2px;top:124.2px;width:33.60000000000002px;height:12.600000000000009px;background:#e6ebf0;border:1px solid #7898bc;box-sizing:border-box;"></div>
<div class="t" style="left:326.80px;top:127.89px;font-size:8px;color:#2a2a2a;transform:scaleX(0.6661);font-family:'Liberation Sans', sans-serif;-webkit-text-stroke:0.2px #2a2a2a;">OK</div>
<div class="r" style="left:314.2px;top:140.4px;width:33.60000000000002px;height:12.299999999999983px;background:#ebebeb;border:1px solid #c4c4c4;box-sizing:border-box;"></div>
<div class="t" style="left:322.50px;top:143.49px;font-size:8px;color:#2a2a2a;transform:scaleX(0.7223);font-family:'Liberation Sans', sans-serif;-webkit-text-stroke:0.2px #2a2a2a;">Cancel</div>
<div class="r" style="left:135.6px;top:205.6px;width:73.70000000000002px;height:66.70000000000002px;background:transparent;border:1px solid #e2e2e2;box-sizing:border-box;"></div>
<div class="r" style="left:138.5px;top:203px;width:20.0px;height:8px;background:#f0f0f0;"></div>
<div class="t" style="left:139.80px;top:204.88px;font-size:6.8px;color:#2a2a2a;transform:scaleX(0.8175);font-family:'Liberation Sans', sans-serif;-webkit-text-stroke:0.2px #2a2a2a;">Effects</div>
<div class="r" style="left:139.3px;top:216.4px;width:6.299999999999983px;height:6.699999999999989px;background:#ffffff;border:1px solid #3a3a3a;box-sizing:border-box;"></div>
<svg class="r" style="left:139.3px;top:216.4px" width="7" height="7" viewBox="0 0 7 7"><path d="M1.5 3.6 L2.9 5.3 L5.3 1.4" stroke="#000" fill="none" stroke-width="1.3"/></svg>
<div class="t" style="left:148.00px;top:217.43px;font-size:6.9px;color:#2a2a2a;transform:scaleX(0.8670);font-family:'Liberation Sans', sans-serif;-webkit-text-stroke:0.2px #2a2a2a;">Strikeout</div>
<div class="r" style="left:139.3px;top:228.9px;width:6.299999999999983px;height:7.199999999999989px;background:#eef4fa;border:1px solid #a6b8cc;box-sizing:border-box;"></div>
<div class="t" style="left:148.00px;top:229.83px;font-size:6.9px;color:#2a2a2a;transform:scaleX(0.8330);font-family:'Liberation Sans', sans-serif;-webkit-text-stroke:0.2px #2a2a2a;">Underline</div>
<div class="t" style="left:139.80px;top:242.23px;font-size:6.9px;color:#2a2a2a;transform:scaleX(0.8142);font-family:'Liberation Sans', sans-serif;-webkit-text-stroke:0.2px #2a2a2a;">Color:</div>
<div class="r" style="left:139.3px;top:250.3px;width:63.39999999999998px;height:11.800000000000011px;background:#ffffff;border:1px solid #c4c4c4;box-sizing:border-box;"></div>
<div class="r" style="left:141.2px;top:252.5px;width:12.600000000000023px;height:6.899999999999977px;background:#5aa8ec;border:1px solid #2a5a90;box-sizing:border-box;"></div>
<div class="t" style="left:154.80px;top:253.48px;font-size:7.2px;color:#2a2a2a;transform:scaleX(0.7136);font-family:'Liberation Sans', sans-serif;-webkit-text-stroke:0.2px #2a2a2a;">Custom</div>
<svg class="r" style="left:195.5px;top:254px" width="6" height="5" viewBox="0 0 6 5"><path d="M1 1 L3 3.2 L5 1" stroke="#333" fill="none" stroke-width="1.1"/></svg>
<div class="r" style="left:213.9px;top:205.8px;width:88.6px;height:38.099999999999994px;background:transparent;border:1px solid #e2e2e2;box-sizing:border-box;"></div>
<div class="r" style="left:216.5px;top:203px;width:22.5px;height:8px;background:#f0f0f0;"></div>
<div class="t" style="left:218.70px;top:204.98px;font-size:6.8px;color:#2a2a2a;transform:scaleX(0.7939);font-family:'Liberation Sans', sans-serif;-webkit-text-stroke:0.2px #2a2a2a;">Sample</div>
<div class="t" style="left:245.60px;top:225.08px;font-size:7px;color:#6ab0e0;transform:scaleX(0.7770);font-family:'Liberation Sans', sans-serif;-webkit-text-stroke:0.1px #6ab0e0;text-decoration:line-through;">AaBbYyZz</div>
<div class="t" style="left:213.90px;top:253.13px;font-size:6.9px;color:#2a2a2a;transform:scaleX(0.8333);font-family:'Liberation Sans', sans-serif;-webkit-text-stroke:0.2px #2a2a2a;">Script:</div>
<div class="r" style="left:213.9px;top:261.3px;width:88.6px;height:11.0px;background:#ffffff;border:1px solid #c4c4c4;box-sizing:border-box;"></div>
<div class="t" style="left:215.80px;top:264.03px;font-size:7.3px;color:#2a2a2a;transform:scaleX(0.7469);font-family:'Liberation Sans', sans-serif;-webkit-text-stroke:0.2px #2a2a2a;">Western</div>
<svg class="r" style="left:295.8px;top:265px" width="6" height="5" viewBox="0 0 6 5"><path d="M1 1 L3 3.2 L5 1" stroke="#333" fill="none" stroke-width="1.1"/></svg>
<svg class="r" style="left:0px;top:0px" width="700" height="415" viewBox="0 0 700 415"><g fill="#e31c23" stroke="none">
<path d="M79.47 23.22 L76.93 25.18 L124.14 86.23 L126.68 84.27 Z"/><circle cx="78.2" cy="24.2" r="1.6"/>
<path d="M121.06 88.61 L129.76 81.89 L135.5 98.3 Z"/>
<path d="M498.61 123.6 L498.39 120.0 L352.89 129.0 L353.11 132.9 Z"/><circle cx="498.5" cy="121.8" r="1.8"/>
<path d="M338 131.8 L354.3 124.4 L355 138 Z"/>
</g></svg>
</body></html>
